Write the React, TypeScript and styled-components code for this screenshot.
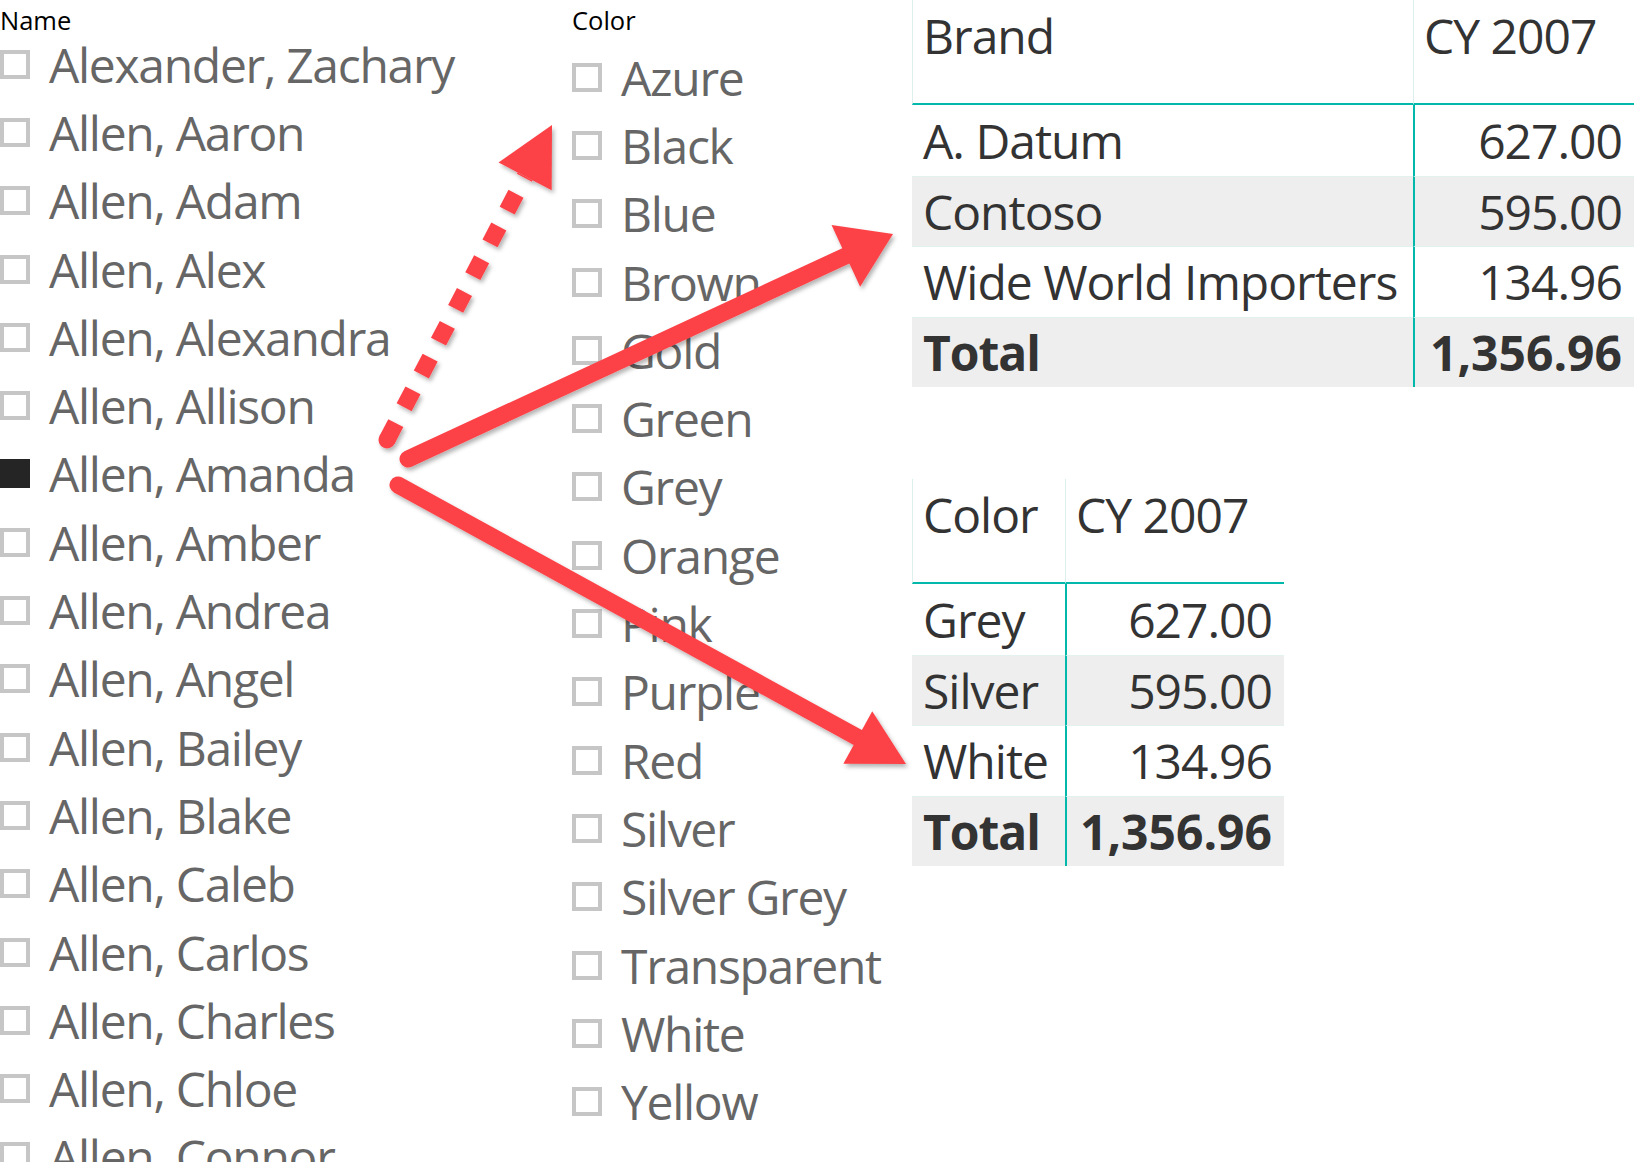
import styled, { createGlobalStyle } from "styled-components";

const GlobalStyle = createGlobalStyle`
  html, body {
    margin: 0;
    padding: 0;
    background: #fff;
  }
  body {
    font-family: "Open Sans", "Noto Sans", sans-serif;
  }
`;

const names = [
  "Alexander, Zachary",
  "Allen, Aaron",
  "Allen, Adam",
  "Allen, Alex",
  "Allen, Alexandra",
  "Allen, Allison",
  "Allen, Amanda",
  "Allen, Amber",
  "Allen, Andrea",
  "Allen, Angel",
  "Allen, Bailey",
  "Allen, Blake",
  "Allen, Caleb",
  "Allen, Carlos",
  "Allen, Charles",
  "Allen, Chloe",
  "Allen, Connor",
];

const colors = [
  "Azure",
  "Black",
  "Blue",
  "Brown",
  "Gold",
  "Green",
  "Grey",
  "Orange",
  "Pink",
  "Purple",
  "Red",
  "Silver",
  "Silver Grey",
  "Transparent",
  "White",
  "Yellow",
];

type Row = { label: string; value: string; total?: boolean };

const brandRows: Row[] = [
  { label: "A. Datum", value: "627.00" },
  { label: "Contoso", value: "595.00" },
  { label: "Wide World Importers", value: "134.96" },
  { label: "Total", value: "1,356.96", total: true },
];

const colorRows: Row[] = [
  { label: "Grey", value: "627.00" },
  { label: "Silver", value: "595.00" },
  { label: "White", value: "134.96" },
  { label: "Total", value: "1,356.96", total: true },
];

type Pt = [number, number];

// line from start to the base of the head, plus the head triangle
const arrowGeometry = (start: Pt, tip: Pt, len: number, half: number) => {
  const dx = tip[0] - start[0];
  const dy = tip[1] - start[1];
  const d = Math.hypot(dx, dy);
  const ux = dx / d;
  const uy = dy / d;
  const base: Pt = [tip[0] - ux * len, tip[1] - uy * len];
  const nx = -uy;
  const ny = ux;
  const points = [
    tip,
    [base[0] + nx * half, base[1] + ny * half],
    [base[0] - nx * half, base[1] - ny * half],
  ]
    .map((p) => p.join(","))
    .join(" ");
  return { base, points };
};

const ARROW_RED = "#fd4247";

const dotted = arrowGeometry([387, 440], [552, 125], 58, 30);
const toBrand = arrowGeometry([408, 459], [893, 234], 52, 34);
const toColor = arrowGeometry([398, 485], [906, 764], 55, 30);

const App = () => {
  return (
    <>
      <GlobalStyle />
      <Page>
        <Slicer $width={572}>
          <SlicerTitle>Name</SlicerTitle>
          <ItemList $offset={0}>
            {names.map((n) => (
              <Item key={n}>
                <Box $checked={n === "Allen, Amanda"} />
                {n}
              </Item>
            ))}
          </ItemList>
        </Slicer>

        <Slicer $width={340}>
          <SlicerTitle>Color</SlicerTitle>
          <ItemList $offset={13}>
            {colors.map((c) => (
              <Item key={c}>
                <Box />
                {c}
              </Item>
            ))}
          </ItemList>
        </Slicer>

        <Visuals>
          <MatrixTable $cols="501px 221px">
            <HeadCell>Brand</HeadCell>
            <HeadCell>CY 2007</HeadCell>
            {brandRows.map((r, i) => (
              <TableRow key={r.label} row={r} index={i} />
            ))}
          </MatrixTable>

          <MatrixTable $cols="153px 219px">
            <HeadCell>Color</HeadCell>
            <HeadCell>CY 2007</HeadCell>
            {colorRows.map((r, i) => (
              <TableRow key={r.label} row={r} index={i} />
            ))}
          </MatrixTable>
        </Visuals>

        <Overlay viewBox="0 0 1634 1162">
          <defs>
            <filter id="shadow" x="-20%" y="-20%" width="140%" height="140%">
              <feDropShadow dx="2" dy="3" stdDeviation="2.2" floodColor="#000" floodOpacity="0.3" />
            </filter>
          </defs>
          <g filter="url(#shadow)" fill={ARROW_RED}>
            <line
              x1={387}
              y1={440}
              x2={dotted.base[0]}
              y2={dotted.base[1]}
              stroke={ARROW_RED}
              strokeWidth={17}
              strokeDasharray="19 18"
            />
            <circle cx={387} cy={440} r={8.5} />
            <polygon points={dotted.points} />

            <line
              x1={408}
              y1={459}
              x2={toBrand.base[0]}
              y2={toBrand.base[1]}
              stroke={ARROW_RED}
              strokeWidth={17}
              strokeLinecap="round"
            />
            <polygon points={toBrand.points} />

            <line
              x1={398}
              y1={485}
              x2={toColor.base[0]}
              y2={toColor.base[1]}
              stroke={ARROW_RED}
              strokeWidth={17}
              strokeLinecap="round"
            />
            <polygon points={toColor.points} />
          </g>
        </Overlay>
      </Page>
    </>
  );
};

const TableRow = ({ row, index }: { row: Row; index: number }) => (
  <>
    <BodyCell $shaded={index % 2 === 1} $first={index === 0} $total={row.total}>
      {row.label}
    </BodyCell>
    <BodyCell
      $shaded={index % 2 === 1}
      $first={index === 0}
      $total={row.total}
      $divider
      $right
    >
      {row.value}
    </BodyCell>
  </>
);

export default App;

const Page = styled.div`
  position: relative;
  width: 1634px;
  height: 1162px;
  overflow: hidden;
  display: flex;
  background: #fff;
`;

const Slicer = styled.div<{ $width: number }>`
  width: ${({ $width }) => $width}px;
  flex-shrink: 0;
  display: flex;
  flex-direction: column;
`;

const SlicerTitle = styled.div`
  box-sizing: border-box;
  height: 30px;
  padding-top: 10px;
  font-size: 25.5px;
  line-height: 20px;
  color: #000;
`;

const ItemList = styled.div<{ $offset: number }>`
  margin-top: ${({ $offset }) => $offset}px;
  display: flex;
  flex-direction: column;
`;

const Item = styled.div`
  height: 68.3px;
  flex-shrink: 0;
  display: flex;
  align-items: center;
  gap: 19px;
  font-size: 48px;
  letter-spacing: -1.3px;
  color: #666;
  white-space: nowrap;
`;

const Box = styled.span<{ $checked?: boolean }>`
  box-sizing: border-box;
  width: 30px;
  height: 29px;
  flex-shrink: 0;
  border: 4px solid ${({ $checked }) => ($checked ? "#252525" : "#c6c6c6")};
  background: ${({ $checked }) => ($checked ? "#252525" : "#fff")};
`;

const Visuals = styled.div`
  flex: 1;
  display: flex;
  flex-direction: column;
  align-items: flex-start;
  gap: 92px;
`;

const MatrixTable = styled.div<{ $cols: string }>`
  display: grid;
  grid-template-columns: ${({ $cols }) => $cols};
  color: #333;
  font-size: 48px;
  letter-spacing: -1px;
  white-space: nowrap;
`;

const HeadCell = styled.div`
  box-sizing: border-box;
  height: 105px;
  padding: 6px 10px 0 10px;
  line-height: 60px;
  border-left: 1px solid #dcefec;
  border-bottom: 2px solid #01b8aa;
`;

const BodyCell = styled.div<{
  $shaded?: boolean;
  $first?: boolean;
  $total?: boolean;
  $divider?: boolean;
  $right?: boolean;
}>`
  box-sizing: border-box;
  height: 70.5px;
  display: flex;
  align-items: center;
  justify-content: ${({ $right }) => ($right ? "flex-end" : "flex-start")};
  padding: 0 12px 0 11px;
  background: ${({ $shaded, $total }) => ($shaded || $total ? "#eeeeee" : "#fff")};
  border-top: ${({ $first }) => ($first ? "none" : "1px solid #e3f1ef")};
  border-left: ${({ $divider }) => ($divider ? "2px solid #01b8aa" : "none")};
  font-weight: ${({ $total }) => ($total ? 700 : 400)};
  letter-spacing: ${({ $total, $right }) => ($total && $right ? "0" : "-1px")};
`;

const Overlay = styled.svg`
  position: absolute;
  left: 0;
  top: 0;
  width: 1634px;
  height: 1162px;
  pointer-events: none;
`;
